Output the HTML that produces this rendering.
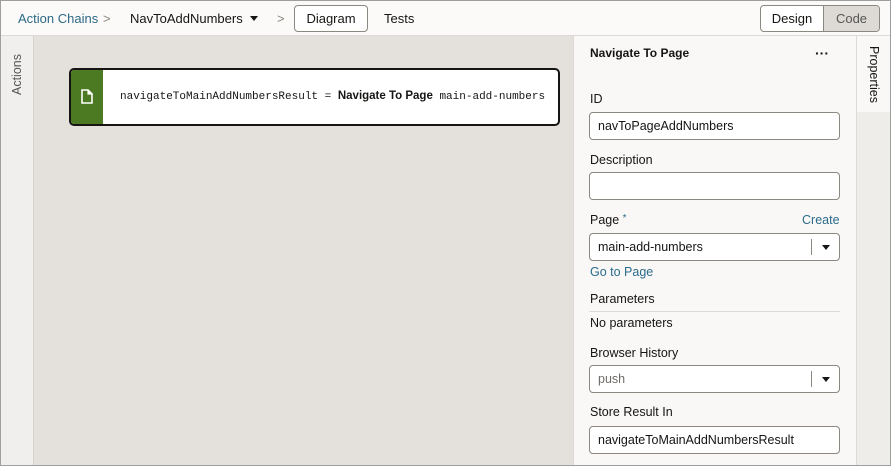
<!DOCTYPE html>
<html><head><meta charset="utf-8"><style>
*{box-sizing:border-box;margin:0;padding:0}
body{width:891px;height:466px;overflow:hidden;font-family:"Liberation Sans",sans-serif;font-size:12px;color:#161513;background:#fff}
.frame{position:absolute;left:0;top:0;width:891px;height:466px;overflow:hidden}
.bd{position:absolute;left:0;top:0;width:891px;height:466px;border:1px solid #9e9e9e;pointer-events:none}
.top{position:absolute;left:0;top:0;width:891px;height:36px;background:#fbfaf9;border-bottom:1px solid #dcdad7}
.t{position:absolute;top:11px;font-size:13px}
.btn{position:absolute;top:5px;height:27px;border:1px solid #8b8781;border-radius:4px;background:#fff;font-size:13px;line-height:25px;text-align:center}
.left{position:absolute;left:0;top:36px;width:34px;height:430px;background:#f1efed;border-right:1px solid #d6d3cf}
.canvas{position:absolute;left:34px;top:36px;width:539px;height:430px;background:#e4e1dd}
.panel{position:absolute;left:573px;top:36px;width:284px;height:430px;background:#f9f8f6;border-left:1px solid #dcdad7}
.rstrip{position:absolute;left:856px;top:36px;width:35px;height:430px;background:#efedea;border-left:1px solid #dcdad7}
.lbl{position:absolute;left:16px;font-size:12.5px}
.inp{position:absolute;left:15px;width:251px;height:28px;border:1px solid #8b8781;border-radius:4px;background:#fff;font-size:12.5px;line-height:26px;padding-left:8px}
.dd::after{content:"";position:absolute;right:27px;top:5px;height:16px;border-left:1px solid #8b8781}
.arr{position:absolute;right:9px;top:11px;border-left:4px solid transparent;border-right:4px solid transparent;border-top:5px solid #161513}
.link{color:#2c6b8c}
</style></head><body><div class="frame">
<div class="top">
 <span class="t link" style="left:18px;color:#2d6a86">Action Chains</span>
 <span class="t" style="left:103px;color:#8b8781">&gt;</span>
 <span class="t" style="left:130px">NavToAddNumbers</span>
 <span style="position:absolute;left:250px;top:16px;border-left:4px solid transparent;border-right:4px solid transparent;border-top:5px solid #161513"></span>
 <span class="t" style="left:277px;color:#8b8781">&gt;</span>
 <div class="btn" style="left:294px;width:74px">Diagram</div>
 <span class="t" style="left:384px">Tests</span>
 <div class="btn" style="left:760px;width:120px;overflow:hidden;display:flex;padding:0"><div style="width:63px;border-right:1px solid #8b8781">Design</div><div style="flex:1;background:#dddad6;color:#555">Code</div></div>
</div>
<div class="left"><div style="position:absolute;transform:rotate(-90deg) translateX(-100%);transform-origin:0 0;font-size:12.5px;color:#555;white-space:nowrap;left:10px;top:18px">Actions</div></div>
<div class="canvas">
 <div style="position:absolute;left:35px;top:32px;width:491px;height:58px;border:2px solid #161513;border-radius:5px;background:#fff;overflow:hidden">
  <div style="position:absolute;left:0;top:0;width:32px;height:54px;background:#4c7a22"></div>
  <svg style="position:absolute;left:10px;top:19px" width="12" height="15" viewBox="0 0 12 15"><path d="M1 1h6l4 4v9H1z" fill="none" stroke="#fff" stroke-width="1.6"/><path d="M7 1v4h4" fill="#fff" stroke="#fff" stroke-width="1.2"/></svg>
  <div style="position:absolute;left:49px;top:20px;font-family:'Liberation Mono',monospace;font-size:11px;white-space:nowrap">navigateToMainAddNumbersResult = <b style="font-family:'Liberation Sans',sans-serif;font-size:11.5px">Navigate To Page</b> main-add-numbers</div>
 </div>
</div>
<div class="panel">
 <div class="lbl" style="top:10px;font-weight:bold;font-size:12px">Navigate To Page</div>
 <div style="position:absolute;left:241px;top:9px;font-weight:bold;font-size:14px">···</div>
 <div class="lbl" style="top:56px">ID</div>
 <div class="inp" style="top:76px">navToPageAddNumbers</div>
 <div class="lbl" style="top:117px">Description</div>
 <div class="inp" style="top:136px"></div>
 <div class="lbl" style="top:177px">Page <span style="color:#2c6b8c;font-size:10px;vertical-align:top">*</span></div>
 <div class="lbl link" style="left:228px;top:177px">Create</div>
 <div class="inp dd" style="top:197px">main-add-numbers<span class="arr"></span></div>
 <div class="lbl link" style="top:229px">Go to Page</div>
 <div class="lbl" style="top:256px">Parameters</div>
 <div style="position:absolute;left:15px;top:275px;width:251px;border-top:1px solid #dcdad7"></div>
 <div class="lbl" style="top:280px">No parameters</div>
 <div class="lbl" style="top:310px">Browser History</div>
 <div class="inp dd" style="top:329px;color:#6f6c68">push<span class="arr"></span></div>
 <div class="lbl" style="top:369px">Store Result In</div>
 <div class="inp" style="top:390px">navigateToMainAddNumbersResult</div>
</div>
<div class="rstrip">
 <div style="position:absolute;left:0;top:0;width:34px;height:76px;background:#f9f8f6"></div>
 <div style="position:absolute;left:24px;top:10px;transform:rotate(90deg);transform-origin:0 0;font-size:12.5px;white-space:nowrap">Properties</div>
</div>
<div class="bd"></div>
</div></body></html>
